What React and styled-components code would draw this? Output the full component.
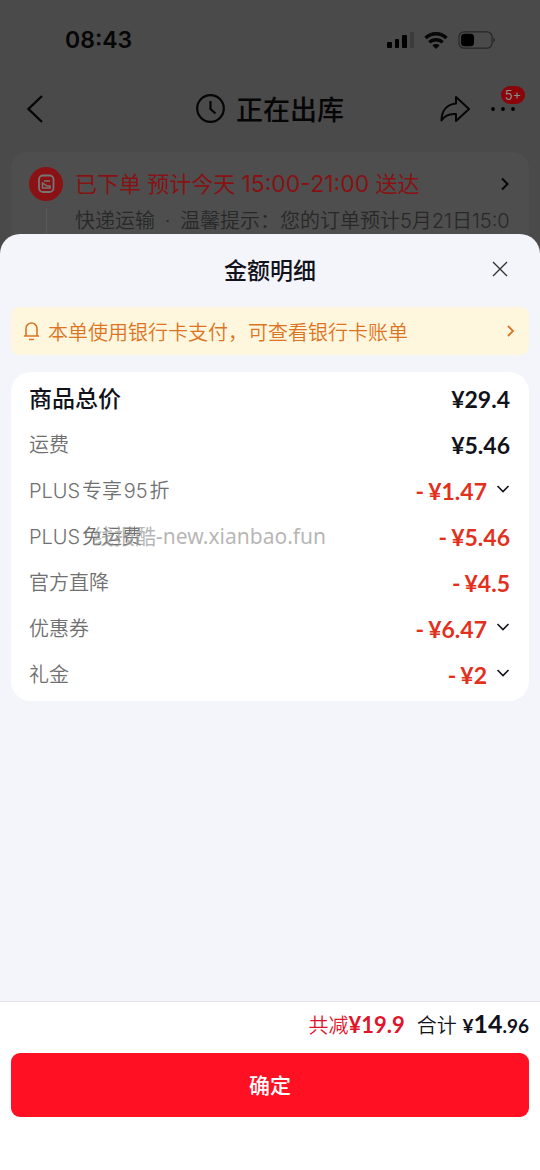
import React, { useState } from 'react';
import styled, { createGlobalStyle } from 'styled-components';

const GlobalStyle = createGlobalStyle`
    * {
        box-sizing: border-box;
    }
    body {
        margin: 0;
        background: #4a4a4a;
        font-family: Inter, 'Noto Sans CJK SC', sans-serif;
        color: #11121a;
    }
    button {
        font-family: inherit;
        border: 0;
        padding: 0;
        background: none;
        color: inherit;
        cursor: pointer;
    }
    h1, h2, p, dl, dd {
        margin: 0;
    }
    svg {
        display: block;
        flex: none;
    }
`;

const Screen = styled.div`
    display: flex;
    flex-direction: column;
    min-height: 100vh;
`;

// Dimmed order page behind the sheet
const OrderPage = styled.div`
    color: #060606;
`;

const StatusBar = styled.div`
    display: flex;
    justify-content: space-between;
    align-items: center;
    height: 80px;
    padding: 0 45px 0 65px;
    font-size: 23px;
    font-weight: 600;
`;

const StatusIcons = styled.div`
    display: flex;
    align-items: center;
    gap: 10px;
`;

const NavBar = styled.header`
    display: grid;
    grid-template-columns: 1fr auto 1fr;
    align-items: center;
    height: 58px;
    padding: 0 24px;
`;

const NavTitle = styled.h1`
    display: flex;
    align-items: center;
    gap: 10px;
    font-size: 27px;
    line-height: 36px;
    font-weight: 500;

    span {
        padding-top: 3px;
    }
`;

const NavActions = styled.div`
    display: flex;
    justify-content: flex-end;
    align-items: center;
    gap: 20px;
`;

const MoreButton = styled.button`
    position: relative;
`;

const Badge = styled.span`
    position: absolute;
    left: 11px;
    bottom: 8px;
    width: 24px;
    border-radius: 9px;
    background: #8a0509;
    color: #8c8c8c;
    font-size: 13px;
    line-height: 18px;
    text-align: center;
`;

const OrderCard = styled.section`
    display: flex;
    gap: 12px;
    margin: 14px 11px 0;
    padding: 15px 19px 24px 18px;
    border-radius: 16px;
    background: #4e4e4e;
`;

const Timeline = styled.div`
    display: flex;
    flex-direction: column;
    align-items: center;
    gap: 7px;
    width: 34px;

    &::after {
        content: '';
        flex: 1;
        width: 1px;
        background: #5a5a5a;
    }
`;

const OrderBody = styled.div`
    flex: 1;
    min-width: 0;
`;

const OrderTitle = styled.div`
    display: flex;
    justify-content: space-between;
    align-items: center;
    font-size: 22px;
    line-height: 34px;
    color: #861214;
`;

const TimeRange = styled.span`
    font-size: 23px;
`;

const OrderTip = styled.p`
    overflow: hidden;
    white-space: nowrap;
    font-size: 20px;
    line-height: 40px;
    font-weight: 350;
    color: #282828;
`;

const Dot = styled.span`
    margin: 0 4px;
`;

const Sheet = styled.section`
    position: relative;
    flex: 1;
    display: flex;
    flex-direction: column;
    margin-top: -31px;
    border-radius: 20px 20px 0 0;
    background: #f4f5fa;
    overflow: hidden;
`;

const SheetHeader = styled.header`
    display: grid;
    grid-template-columns: 1fr auto 1fr;
    align-items: center;
    height: 73px;
    padding: 0 32px;
`;

const SheetTitle = styled.h2`
    grid-column: 2;
    font-size: 23px;
    line-height: 32px;
    font-weight: 500;
`;

const CloseButton = styled.button`
    justify-self: end;
    padding-bottom: 4px;
`;

const Notice = styled.a`
    display: flex;
    align-items: center;
    gap: 8px;
    height: 48px;
    margin: 0 11px;
    padding: 0 14px 0 12px;
    border-radius: 8px;
    background: #fff7dd;
    color: #dd7424;
    font-size: 20px;
    font-weight: 350;
    text-decoration: none;

    span {
        flex: 1;
    }
`;

const DetailCard = styled.dl`
    margin: 17px 11px 0;
    padding: 4px 19px 3px 18px;
    border-radius: 20px;
    background: #fff;
`;

const DetailRow = styled.div`
    position: relative;
    display: flex;
    justify-content: space-between;
    align-items: center;
    height: 46px;
`;

const DetailLabel = styled.dt`
    font-size: ${({ $strong }) => ($strong ? '23px' : '20px')};
    line-height: ${({ $strong }) => ($strong ? '28px' : '24px')};
    font-weight: ${({ $strong }) => ($strong ? 500 : 350)};
    color: ${({ $strong }) => ($strong ? '#11121a' : '#707070')};
`;

const DetailAmount = styled.dd`
    display: flex;
    align-items: center;
    font-family: Lato, sans-serif;
    font-size: 23px;
    font-weight: 700;
    color: ${({ $discount }) => ($discount ? '#e2301c' : '#11121a')};
`;

const Minus = styled.span`
    margin-right: 4px;
`;

const ExpandButton = styled.button`
    padding-bottom: 4px;
    margin-left: 9px;
    color: #11121a;
`;

const Watermark = styled.span`
    position: absolute;
    left: 64px;
    top: 8px;
    font-family: 'Noto Sans', 'Noto Sans CJK SC', sans-serif;
    font-size: 21px;
    line-height: 28px;
    white-space: nowrap;
    color: rgba(150, 150, 150, 0.7);
    pointer-events: none;
`;

const Footer = styled.footer`
    margin-top: auto;
    padding: 0 11px 53px;
    border-top: 1px solid #e3e5e8;
    background: #fff;
`;

const Totals = styled.div`
    display: flex;
    justify-content: flex-end;
    align-items: baseline;
    gap: 12px;
    height: 51px;
    font-size: 20px;
    line-height: 42px;
    font-weight: 350;
`;

const Saved = styled.span`
    color: #e0142a;
`;

const Price = styled.b`
    font-family: Lato, sans-serif;
    font-size: ${({ $size }) => $size}px;
    font-weight: 700;
`;

const ConfirmButton = styled.button`
    display: block;
    width: 100%;
    height: 64px;
    padding-bottom: 2px;
    border-radius: 9px;
    background: #ff1023;
    color: #fff;
    font-size: 21px;
    font-weight: 500;
`;

const SignalIcon = () => (
    <svg width="27" height="17" viewBox="0 0 27 17">
        <rect x="0" y="10" width="5" height="6" rx="1" />
        <rect x="8" y="7" width="4" height="9" rx="1" />
        <rect x="15" y="3" width="5" height="13" rx="1" />
        <rect x="23" y="0" width="4" height="16" rx="1" fill="#3b3b3b" />
    </svg>
);

const WifiIcon = () => (
    <svg width="24" height="17" viewBox="0 0 24 17" fill="none" stroke="#060606" strokeWidth="3.4">
        <path d="M1.5 6a15 15 0 0 1 21 0" />
        <path d="M5.4 10.4a9.5 9.5 0 0 1 13.2 0" />
        <path d="M8.4 13.4a5.2 5.2 0 0 1 7.2 0L12 17z" fill="#060606" stroke="none" />
    </svg>
);

const BatteryIcon = () => (
    <svg width="37" height="18" viewBox="0 0 37 18">
        <rect x="1" y="0.8" width="33" height="16.4" rx="5" fill="none" stroke="#262626" strokeWidth="1.2" />
        <rect x="3" y="2.8" width="13" height="12.4" rx="3.5" />
        <path d="M35.3 6.5c2 .8 2 4.2 0 5z" fill="#262626" />
    </svg>
);

const BackIcon = () => (
    <svg width="20" height="30" viewBox="0 0 20 30" fill="none" stroke="currentColor" strokeWidth="2.4">
        <path d="M18 2 4.5 15 18 28" />
    </svg>
);

const ClockIcon = () => (
    <svg width="30" height="30" viewBox="0 0 30 30" fill="none" stroke="currentColor" strokeWidth="2.2">
        <circle cx="14.5" cy="14.5" r="13.3" />
        <path d="M14.5 7v8l5 4.5" />
    </svg>
);

const ShareIcon = () => (
    <svg width="30" height="28" viewBox="0 0 30 28" fill="none" stroke="currentColor" strokeWidth="2" strokeLinejoin="round">
        <path d="M16 2 29 14 16 26v-7C9 18.5 4.5 20.5 1.5 25.5 1.5 16 6.5 9.5 16 8.5z" />
    </svg>
);

const DotsIcon = () => (
    <svg width="26" height="6" viewBox="0 0 26 6">
        <circle cx="3" cy="3" r="1.9" />
        <circle cx="13" cy="3" r="1.9" />
        <circle cx="23" cy="3" r="1.9" />
    </svg>
);

const OrderIcon = () => (
    <svg width="34" height="34" viewBox="0 0 34 34" fill="none" stroke="#757575" strokeWidth="1.8">
        <circle cx="17" cy="17" r="17" fill="#8a1214" stroke="none" />
        <rect x="10" y="8.5" width="14.5" height="16.5" rx="4" />
        <path d="M15 14h6M13.5 16v5h7.500v-2h-3l-2-1.500z" strokeWidth="1.5" />
    </svg>
);

const BellIcon = () => (
    <svg width="17" height="20" viewBox="0 0 17 20" fill="none" stroke="currentColor" strokeWidth="1.6">
        <path d="M3 15V7.500a5.500 5.500 0 0 1 11 0V15M1 15h15M6 18.500h5" />
    </svg>
);

const ChevronRight = () => (
    <svg width="8" height="14" viewBox="0 0 8 14" fill="none" stroke="currentColor" strokeWidth="1.8">
        <path d="M1 2 6 7 1 12" />
    </svg>
);

const ChevronDown = () => (
    <svg width="14" height="8" viewBox="0 0 14 8" fill="none" stroke="currentColor" strokeWidth="1.6">
        <path d="M1.5 1 7 6.5 12.5 1" />
    </svg>
);

const CloseIcon = () => (
    <svg width="16" height="16" viewBox="0 0 16 16" fill="none" stroke="#333" strokeWidth="1.4">
        <path d="M1 1l14 14M15 1 1 15" />
    </svg>
);

const details = [
    { label: '商品总价', amount: '¥29.4', strong: true },
    { label: '运费', amount: '¥5.46' },
    { label: 'PLUS\u200a专享\u200a95\u200a折', amount: '¥1.47', discount: true, expandable: true },
    { label: 'PLUS\u200a免运费', amount: '¥5.46', discount: true, watermark: '线报酷-new.xianbao.fun' },
    { label: '官方直降', amount: '¥4.5', discount: true },
    { label: '优惠券', amount: '¥6.47', discount: true, expandable: true },
    { label: '礼金', amount: '¥2', discount: true, expandable: true },
];

const App = () => {
    const [expanded, setExpanded] = useState(null);

    return (
        <Screen>
            <GlobalStyle />
            <OrderPage>
                <StatusBar>
                    <span>08:43</span>
                    <StatusIcons>
                        <SignalIcon />
                        <WifiIcon />
                        <BatteryIcon />
                    </StatusIcons>
                </StatusBar>
                <NavBar>
                    <button type="button" aria-label="返回"><BackIcon /></button>
                    <NavTitle><ClockIcon /><span>正在出库</span></NavTitle>
                    <NavActions>
                        <button type="button" aria-label="分享"><ShareIcon /></button>
                        <MoreButton type="button" aria-label="更多">
                            <DotsIcon />
                            <Badge>5+</Badge>
                        </MoreButton>
                    </NavActions>
                </NavBar>
                <OrderCard>
                    <Timeline><OrderIcon /></Timeline>
                    <OrderBody>
                        <OrderTitle>
                            <span>已下单 预计今天 <TimeRange>15:00-21:00</TimeRange> 送达</span>
                            <svg width="10" height="14" viewBox="0 0 10 14" fill="none" stroke="#060606" strokeWidth="2">
                                <path d="M2 1.5 7.5 7 2 12.5" />
                            </svg>
                        </OrderTitle>
                        <OrderTip>快递运输 <Dot>·</Dot> 温馨提示：您的订单预计5月21日15:0</OrderTip>
                    </OrderBody>
                </OrderCard>
            </OrderPage>

            <Sheet role="dialog" aria-labelledby="sheet-title">
                <SheetHeader>
                    <SheetTitle id="sheet-title">金额明细</SheetTitle>
                    <CloseButton type="button" aria-label="关闭"><CloseIcon /></CloseButton>
                </SheetHeader>
                <Notice href="#bill">
                    <BellIcon />
                    <span>本单使用银行卡支付，可查看银行卡账单</span>
                    <ChevronRight />
                </Notice>
                <DetailCard>
                    {details.map((item) => (
                        <DetailRow key={item.label}>
                            <DetailLabel $strong={item.strong}>{item.label}</DetailLabel>
                            <DetailAmount $discount={item.discount}>
                                {item.discount && <Minus>-</Minus>}
                                {item.amount}
                                {item.expandable && (
                                    <ExpandButton
                                        type="button"
                                        aria-label={`展开${item.label}`}
                                        aria-expanded={expanded === item.label}
                                        onClick={() => setExpanded(expanded === item.label ? null : item.label)}
                                    >
                                        <ChevronDown />
                                    </ExpandButton>
                                )}
                            </DetailAmount>
                            {item.watermark && <Watermark>{item.watermark}</Watermark>}
                        </DetailRow>
                    ))}
                </DetailCard>
                <Footer>
                    <Totals>
                        <Saved>共减<Price $size={22}>¥19.9</Price></Saved>
                        <span>
                            合计 <Price $size={19}>¥</Price><Price $size={25}>14</Price><Price $size={19}>.96</Price>
                        </span>
                    </Totals>
                    <ConfirmButton type="button">确定</ConfirmButton>
                </Footer>
            </Sheet>
        </Screen>
    );
};

export default App;
